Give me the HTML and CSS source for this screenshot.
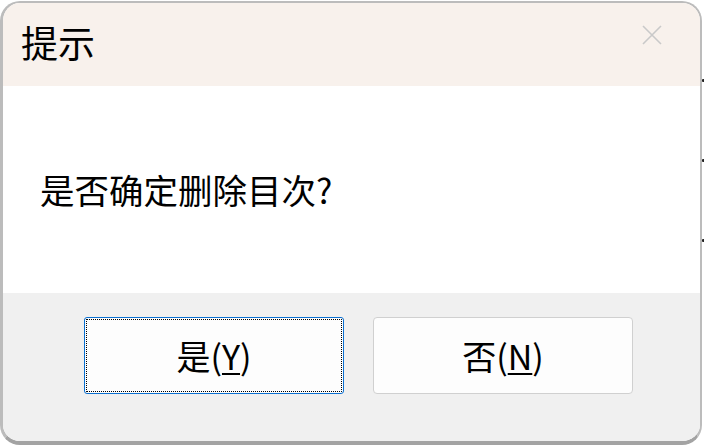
FILE: index.html
```html
<!DOCTYPE html>
<html lang="zh-CN">
<head>
<meta charset="utf-8">
<title>提示</title>
<link rel="stylesheet" href="styles.css">
</head>
<body>
<div class="window">
  <div class="titlebar">
    <span class="title">提示</span>
    <span class="close" aria-label="关闭">
      <svg width="20" height="20" viewBox="0 0 20 20"><path d="M1 1 L19 19 M19 1 L1 19" stroke="#c9c9c9" stroke-width="1.6" fill="none"/></svg>
    </span>
  </div>
  <div class="content">
    <p class="message">是否确定删除目次?</p>
  </div>
  <div class="footer">
    <button class="btn btn-default">是(<u>Y</u>)</button>
    <button class="btn">否(<u>N</u>)</button>
  </div>
</div>
<span class="dot dot1"></span>
<span class="dot dot2"></span>
<span class="dot dot3"></span>
</body>
</html>
```

FILE: styles.css
```css
html, body {
  margin: 0;
  padding: 0;
  background: #ffffff;
  width: 704px;
  height: 445px;
  overflow: hidden;
  font-family: "Noto Sans CJK SC", "Noto Sans", sans-serif;
}

.window {
  margin-top: 1px;
  width: 702px;
  height: 444px;
  box-sizing: border-box;
  border: 2px solid #bcbcbc;
  border-left-width: 3px;
  border-bottom: 4px solid #a3a3a3;
  border-radius: 20px;
  overflow: hidden;
  display: flex;
  flex-direction: column;
}

.titlebar {
  height: 83px;
  flex: none;
  background: #f8f1ec;
  display: flex;
  align-items: center;
  justify-content: space-between;
  padding: 0 38px 0 18px;
}

.title {
  font-size: 37px;
  color: #000;
  line-height: 1;
  margin-top: -4px;
}

.close {
  display: flex;
  width: 20px;
  height: 20px;
  margin-top: -20px;
}

.content {
  height: 207px;
  flex: none;
  background: #ffffff;
  display: flex;
  align-items: center;
  padding-left: 37px;
}

.message {
  margin: 0;
  font-size: 34.5px;
  color: #000;
  line-height: 1;
  margin-top: 0px;
}

.footer {
  flex: 1;
  background: #f0f0f0;
  display: flex;
  align-items: flex-start;
  gap: 29px;
  padding: 24px 0 0 81px;
}

.btn {
  width: 260px;
  height: 77px;
  box-sizing: border-box;
  background: #fdfdfd;
  border: 1px solid #d0d0d0;
  border-radius: 4px;
  font-family: "Noto Sans CJK SC", "Noto Sans", sans-serif;
  font-size: 34px;
  color: #000;
  padding: 0;
  line-height: 1;
}

.btn u {
  text-decoration-thickness: 2px;
  text-underline-offset: 3px;
}

.btn-default {
  border-color: #0a6fd0;
  border-radius: 3px;
  outline: 1px dotted #000;
  outline-offset: -3px;
}

.dot {
  position: absolute;
  left: 702px;
  width: 3px;
  height: 3px;
  background: #222;
  border-radius: 1px;
}
.dot1 { top: 79px; }
.dot2 { top: 159px; }
.dot3 { top: 239px; }
```
